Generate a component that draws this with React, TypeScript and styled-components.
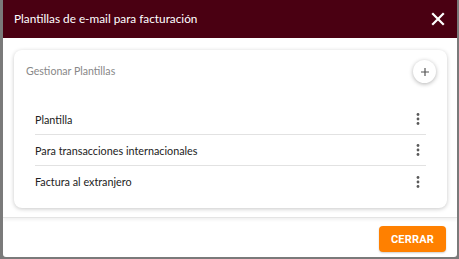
import * as React from 'react';
import styled, { createGlobalStyle } from 'styled-components';

const GlobalStyle = createGlobalStyle`
  html, body {
    margin: 0;
    padding: 0;
    background: #7a7a7a;
    font-family: Lato, "Noto Sans", sans-serif;
  }
  * { box-sizing: border-box; }
`;

const templates = ['Plantilla', 'Para transacciones internacionales', 'Factura al extranjero'];

function KebabIcon() {
  return (
    <svg width="16" height="16" viewBox="0 0 16 16" aria-hidden="true">
      <circle cx="8" cy="3.5" r="1.4" fill="#5a5a5a" />
      <circle cx="8" cy="8" r="1.4" fill="#5a5a5a" />
      <circle cx="8" cy="12.5" r="1.4" fill="#5a5a5a" />
    </svg>
  );
}

function CloseIcon() {
  return (
    <svg width="14" height="14" viewBox="0 0 14 14" aria-hidden="true">
      <path d="M2 2 L12 12 M12 2 L2 12" stroke="#fff" strokeWidth="2.2" strokeLinecap="square" />
    </svg>
  );
}

function PlusIcon() {
  return (
    <svg width="10" height="10" viewBox="0 0 10 10" aria-hidden="true">
      <path d="M5 1 V9 M1 5 H9" stroke="#555" strokeWidth="1.2" />
    </svg>
  );
}

export default function App() {
  return (
    <React.Fragment>
      <GlobalStyle />
      <Backdrop>
        <Dialog>
          <Header>
            <Title>Plantillas de e-mail para facturación</Title>
            <CloseButton aria-label="Cerrar">
              <CloseIcon />
            </CloseButton>
          </Header>
          <Body>
            <Card>
              <CardHeader>
                <CardTitle>Gestionar Plantillas</CardTitle>
                <AddButton aria-label="Agregar">
                  <PlusIcon />
                </AddButton>
              </CardHeader>
              <List>
                {templates.map((t) => (
                  <Row key={t}>
                    <RowText>{t}</RowText>
                    <MenuButton aria-label="Opciones">
                      <KebabIcon />
                    </MenuButton>
                  </Row>
                ))}
              </List>
            </Card>
          </Body>
          <Footer>
            <CloseAction>CERRAR</CloseAction>
          </Footer>
        </Dialog>
      </Backdrop>
    </React.Fragment>
  );
}

const Backdrop = styled.div`
  width: 459px;
  height: 259px;
  padding: 0 2px 2px 3px;
  overflow: hidden;
`;

const Dialog = styled.div`
  height: 100%;
  background: #fff;
  display: flex;
  flex-direction: column;
  border-radius: 0 0 3px 3px;
  overflow: hidden;
`;

const Header = styled.div`
  height: 38px;
  flex-shrink: 0;
  background: #4a0012;
  display: flex;
  align-items: center;
  justify-content: space-between;
  padding: 0 10px 0 11px;
`;

const Title = styled.div`
  color: #fff;
  font-size: 11.8px;
  line-height: 20px;
`;

const CloseButton = styled.button`
  border: 0;
  background: none;
  padding: 0;
  width: 18px;
  height: 18px;
  display: flex;
  align-items: center;
  justify-content: center;
  cursor: pointer;
`;

const Body = styled.div`
  flex: 1;
  padding: 12px 10px 9px 11px;
  border-bottom: 1px solid #e4e4e4;
  box-shadow: 0 2px 3px rgba(0, 0, 0, 0.06);
`;

const Card = styled.div`
  background: #fff;
  border-radius: 8px;
  box-shadow: 0 1px 4px rgba(0, 0, 0, 0.22);
  padding: 0 21px 11px 21px;
`;

const CardHeader = styled.div`
  height: 54px;
  display: flex;
  align-items: flex-start;
  justify-content: space-between;
  padding: 10px 0 0 0;
  margin: 0 -10px 0 -9px;
`;

const CardTitle = styled.div`
  color: #888;
  font-size: 10.6px;
  line-height: 22px;
`;

const AddButton = styled.button`
  width: 23px;
  height: 23px;
  border-radius: 50%;
  border: 0;
  background: #fff;
  box-shadow: 0 1px 4px rgba(0, 0, 0, 0.3);
  display: flex;
  align-items: center;
  justify-content: center;
  padding: 0;
  cursor: pointer;
`;

const List = styled.div`
  display: flex;
  flex-direction: column;
`;

const Row = styled.div`
  height: 31px;
  display: flex;
  align-items: center;
  justify-content: space-between;
  border-bottom: 1px solid #e2e2e2;
  &:last-child {
    border-bottom: 0;
  }
`;

const RowText = styled.div`
  color: #222;
  font-size: 10.8px;
`;

const MenuButton = styled.button`
  border: 0;
  background: none;
  padding: 0;
  width: 16px;
  height: 16px;
  display: flex;
  cursor: pointer;
`;

const Footer = styled.div`
  height: 39px;
  flex-shrink: 0;
  display: flex;
  justify-content: flex-end;
  align-items: flex-start;
  padding: 8px 11px 0 0;
`;

const CloseAction = styled.button`
  width: 67px;
  height: 26px;
  border: 0;
  border-radius: 4px;
  background: #ff8000;
  color: #fff;
  font-family: Roboto, sans-serif;
  font-weight: 700;
  font-size: 11px;
  letter-spacing: 0.2px;
  box-shadow: 0 1px 2px rgba(0, 0, 0, 0.2);
  cursor: pointer;
`;
